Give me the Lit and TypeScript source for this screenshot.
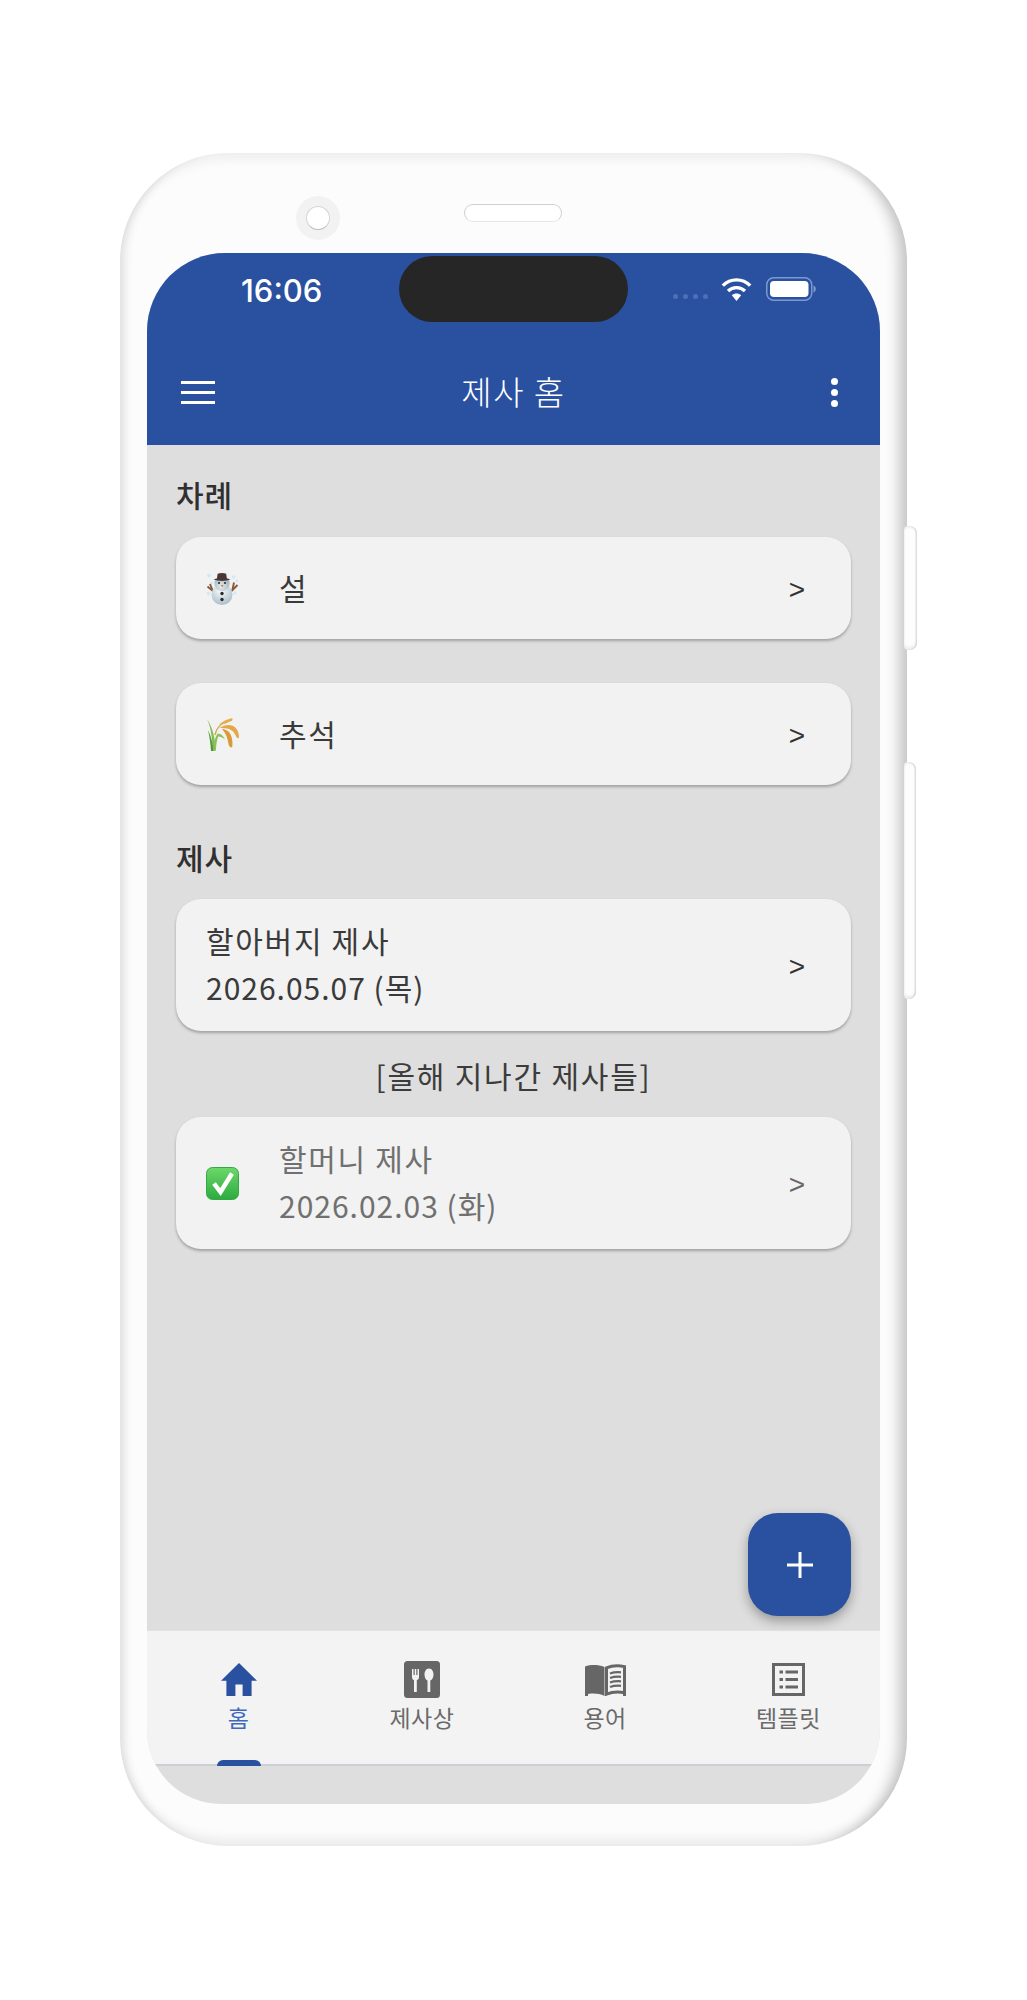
import { LitElement, html, css, svg } from "lit";
import { customElement } from "lit/decorators.js";

const snowman = svg`<svg class="emoji" viewBox="0 0 33 33">
  <defs>
    <radialGradient id="sb" cx="45%" cy="30%" r="75%"><stop offset="0" stop-color="#fbfdfd"/><stop offset="1" stop-color="#a4b9c4"/></radialGradient>
    <radialGradient id="sh" cx="45%" cy="70%" r="75%"><stop offset="0" stop-color="#e6eef1"/><stop offset="1" stop-color="#8fa7b3"/></radialGradient>
  </defs>
  <g fill="#cfeaf8"><circle cx="3" cy="3.500" r="2"/><circle cx="27.500" cy="5" r="1.800"/><circle cx="31" cy="9" r="1.400"/><circle cx="2.500" cy="21.500" r="1.900"/><circle cx="29" cy="21" r="1.700"/><circle cx="5.500" cy="11" r="1.400"/></g>
  <path d="M1.500 14.500l6 5M4 12l2.500 6M31.500 13l-6 6M28 10.500l-1.500 7" stroke="#8a5a3c" stroke-width="1.900" fill="none"/>
  <circle cx="16" cy="22.500" r="10.500" fill="url(#sb)"/>
  <circle cx="16" cy="11.500" r="7.600" fill="url(#sh)"/>
  <path d="M7.500 7.200c2-.6 2.800-.5 3.500-.8l.6-4.700c2.600-1 6.200-1 8.600 0l.6 4.700c.7.300 1.800.2 3.700.8-5 2.300-12 2.300-17-0z" fill="#4a3634"/>
  <circle cx="13" cy="11" r="1.100" fill="#2f2f2f"/><circle cx="19" cy="11" r="1.100" fill="#2f2f2f"/>
  <path d="M14.700 13h2.800l-1.300 2.600z" fill="#e8763a"/>
  <circle cx="16" cy="21.500" r="1.700" fill="#2b2b2b"/><circle cx="16" cy="27.500" r="1.700" fill="#2b2b2b"/>
</svg>`;

const rice = svg`<svg class="emoji" viewBox="0 0 33 33">
  <path d="M1 1c4 8 5.500 20 5.500 32l3-.6C9.500 21 6.500 9 1 1z" fill="#84ba4e"/>
  <path d="M5 33c-.5-8-1.500-14-3-21 3 6 5 14 5.500 21z" fill="#4f9a34"/>
  <path d="M7.500 33c.3-7 1-13 4-17.500 3.500 0 6 2.800 7.500 5.800-2.500-1.800-5-3-6.800-2.800-1.700 4.500-2 9.500-2.400 14z" fill="#8cc05a"/>
  <path d="M9 17C11 8 18 3 26 2" stroke="#cfa95e" stroke-width="1.400" fill="none"/>
  <path d="M13 6.500c3.500-3 8-5.500 12.500-6.300 1.800 0 1.300 2-.3 2.900-3.500 2-8 3.600-12.200 3.400z" fill="#e5ae4d"/>
  <path d="M13.500 10c5.500-4 12-4 15.500-.8 3 2.800 4 6.500 4 10.800-1.800.7-2.800-1-3.700-3.200-1.900-4.300-6-7.300-15.800-6.800z" fill="#e5a847"/>
  <path d="M16 11c5 .5 8 3 9.300 7.300.9 3.200 1.700 7 .9 10.700-1.900 1.400-3.200-.6-3.700-3.200-.9-5.300-2.700-11-6.500-14.800z" fill="#d99a38"/>
</svg>`;

const check = svg`<svg class="emoji" viewBox="0 0 33 33">
  <defs><linearGradient id="cg" x1="0" y1="0" x2="0" y2="1"><stop offset="0" stop-color="#6cd86a"/><stop offset="1" stop-color="#2cab3f"/></linearGradient></defs>
  <rect x=".5" y=".5" width="32" height="32" rx="6" fill="url(#cg)" stroke="#37a648" stroke-width="1"/>
  <path d="M8 16.500l6.500 8.500L26 6.500" fill="none" stroke="#fff" stroke-width="4.500" stroke-linejoin="miter"/>
</svg>`;

const homeIcon = svg`<svg class="nav-svg" width="36" height="33" viewBox="2 3 20 17.400" preserveAspectRatio="none"><path fill="#2a50a0" d="M10 20.400v-6h4v6h5v-8h3L12 3 2 12.400h3v8z"/></svg>`;
const dishIcon = svg`<svg class="nav-svg" width="36" height="37" viewBox="0 0 36 37">
  <rect width="36" height="37" rx="3.500" fill="#666"/>
  <path fill="#f2f2f2" d="M8 8h1.500v6h1.200V8h1.600v6h1.200V8H15v8c0 1.800-1 2.800-2.200 3.200V31H10V19.200C8.800 18.800 8 17.800 8 16z"/>
  <path fill="#f2f2f2" d="M25 7.500c3 0 4.500 3 4.500 6 0 3-1.500 5.400-3.200 5.900V31h-2.800V19.400c-1.700-.5-3-2.900-3-5.900 0-3 1.500-6 4.500-6z"/>
</svg>`;
const bookIcon = svg`<svg class="nav-svg" width="41" height="32" viewBox="0 0 41 32">
  <path fill="#666" d="M0 2.500C6 .5 13 .5 19.500 3v29C13 29 6 29 0 31z"/>
  <path fill="none" stroke="#666" stroke-width="3" d="M21.500 3.800C27 1.600 33.500 1.400 39.500 2.600v26.200C33.500 27.600 27 28 21.500 30.200z"/>
  <path fill="#666" d="M0 30h3v2H0zM38 29h3v3h-3z"/>
  <path fill="none" stroke="#666" stroke-width="2.200" d="M25 9.500c3.500-1.300 7-1.500 11-1.200M25 14c3.500-1.300 7-1.500 11-1.200M25 18.500c3.500-1.300 7-1.500 11-1.200M25 23c3.500-1.300 7-1.500 11-1.200"/>
</svg>`;
const listIcon = svg`<svg class="nav-svg" width="33" height="33" viewBox="0 0 33 33">
  <rect x="1.500" y="1.500" width="30" height="30" fill="none" stroke="#666" stroke-width="3"/>
  <g fill="#666"><rect x="7.500" y="7.500" width="3.500" height="3"/><rect x="7.500" y="15" width="3.500" height="3"/><rect x="7.500" y="22.500" width="3.500" height="3"/>
  <rect x="13.500" y="7.500" width="12.500" height="3"/><rect x="13.500" y="15" width="12.500" height="3"/><rect x="13.500" y="22.500" width="12.500" height="3"/></g>
</svg>`;

const navItems = [
  { icon: homeIcon, label: "홈", active: true },
  { icon: dishIcon, label: "제사상", active: false },
  { icon: bookIcon, label: "용어", active: false },
  { icon: listIcon, label: "템플릿", active: false },
];

@customElement("app-root")
export class AppRoot extends LitElement {
  static styles = css`
    :host {
      display: block;
      width: 1027px;
      height: 2000px;
      background: #fff;
      font-family: "Noto Sans CJK KR", "Noto Sans", sans-serif;
      color: #3a3a3a;
    }
    .page { padding: 153px 0 0 120px; }
    .phone {
      position: relative;
      box-sizing: border-box;
      width: 787px;
      height: 1693px;
      padding: 100px 27px 42px;
      border-radius: 108px;
      background: #fcfcfc;
      box-shadow:
        inset -20px 0 14px -12px rgba(0, 0, 0, 0.22),
        inset 14px 0 10px -10px rgba(0, 0, 0, 0.12),
        inset 0 16px 12px -10px rgba(0, 0, 0, 0.06),
        inset 0 -16px 12px -10px rgba(0, 0, 0, 0.08);
    }
    .side {
      position: absolute;
      left: 784px;
      background: #fdfdfd;
      border-radius: 4px 7px 7px 4px;
      box-shadow: inset -1.5px 0 1px rgba(0, 0, 0, 0.1), inset 0 -3px 3px rgba(0, 0, 0, 0.07), inset 0 2px 2px rgba(0, 0, 0, 0.05);
    }
    .side.one { top: 373px; width: 13px; height: 124px; }
    .side.two { top: 609px; width: 12px; height: 237px; }
    .camera {
      position: absolute;
      left: 176px;
      top: 43px;
      width: 44px;
      height: 44px;
      border-radius: 50%;
      background: #f2f2f2;
      display: flex;
      align-items: center;
      justify-content: center;
    }
    .camera i {
      display: block;
      width: 24px;
      height: 24px;
      box-sizing: border-box;
      border-radius: 50%;
      background: #fff;
      border: 1.5px solid #d4d4d4;
      border-bottom-color: #bbb;
    }
    .speaker {
      position: absolute;
      left: 344px;
      top: 51px;
      width: 98px;
      height: 18px;
      box-sizing: border-box;
      border-radius: 9px;
      background: #fff;
      border: 1.5px solid #d0d0d0;
      border-bottom-color: #e6e6e6;
    }
    .screen {
      height: 1551px;
      border-radius: 78px 78px 74px 74px;
      overflow: hidden;
      background: #dedede;
      display: flex;
      flex-direction: column;
    }
    .appbar { background: #2a50a0; color: #fff; height: 192px; flex: none; }
    .status {
      position: relative;
      height: 87px;
      display: flex;
      align-items: flex-start;
      box-sizing: border-box;
      padding: 22px 0 0 94px;
    }
    .time { font: 500 31px/1 Inter, "Liberation Sans", sans-serif; }
    .notch {
      position: absolute;
      left: 252px;
      top: 3px;
      width: 229px;
      height: 66px;
      border-radius: 33px;
      background: #262626;
    }
    .indicators {
      position: absolute;
      left: 526px;
      top: 24px;
      display: flex;
      align-items: flex-start;
    }
    .signal { display: flex; gap: 5px; margin-top: 17px; margin-right: 13px; }
    .signal i { display: block; width: 5px; height: 5px; border-radius: 50%; background: #4b70b6; }
    .wifi { display: block; margin-right: 14px; }
    .battery { display: block; }
    .toolbar {
      height: 105px;
      display: grid;
      grid-template-columns: 1fr auto 1fr;
      align-items: center;
      padding: 0 34px;
    }
    .burger { display: flex; flex-direction: column; gap: 7px; width: 34px; }
    .burger i { display: block; height: 3px; background: #fff; }
    .title { font-size: 33px; font-weight: 300; line-height: 1; letter-spacing: 1.5px; margin-top: -3px; }
    .kebab { display: flex; flex-direction: column; gap: 4px; justify-self: end; margin-right: 8px; }
    .kebab i { display: block; width: 7px; height: 7px; border-radius: 50%; background: #fff; }
    .content {
      position: relative;
      flex: 1;
      display: flex;
      flex-direction: column;
      padding: 0 29px;
    }
    .section {
      font-size: 30px;
      font-weight: 500;
      letter-spacing: 1px;
      color: #303030;
      line-height: 40px;
      margin: 29px 0 23px;
    }
    .section.second { margin: 52px 0 22px; }
    .card {
      display: flex;
      align-items: center;
      height: 102px;
      box-sizing: border-box;
      padding: 0 46px 0 30px;
      background: #f2f2f2;
      border-radius: 25px;
      box-shadow: 0 2px 3px rgba(0, 0, 0, 0.28);
      flex: none;
    }
    .card + .card { margin-top: 44px; }
    .card.tall { height: 132px; }
    .card.muted { color: #707070; }
    .emoji { display: block; width: 33px; height: 33px; flex: none; margin-right: 40px; }
    .text { flex: 1; font-size: 30px; line-height: 47px; letter-spacing: 1.7px; padding-bottom: 2px; }
    .date { letter-spacing: 1px; display: block; }
    .arrow { font: 400 28px/1 "Liberation Sans", sans-serif; color: #333; margin-top: 3px; }
    .muted .arrow { color: #666; }
    .passed {
      text-align: center;
      font-size: 30px;
      line-height: 40px;
      letter-spacing: 1.8px;
      color: #3c3c3c;
      margin: 24px 0 22px;
    }
    .fab {
      position: absolute;
      right: 29px;
      bottom: 14px;
      width: 103px;
      height: 103px;
      border-radius: 30px;
      background: #2a50a0;
      box-shadow: 0 5px 12px rgba(0, 0, 0, 0.32);
      display: flex;
      align-items: center;
      justify-content: center;
    }
    .nav {
      flex: none;
      height: 136px;
      background: #f3f3f3;
      border-top: 1px solid #e2e2e2;
      border-bottom: 2px solid #cfcdd6;
      box-sizing: border-box;
      display: grid;
      grid-template-columns: repeat(4, 1fr);
    }
    .tab {
      position: relative;
      display: flex;
      flex-direction: column;
      align-items: center;
      color: #6a6a6a;
      font-size: 23px;
      letter-spacing: 0.5px;
      line-height: 30px;
    }
    .icon-box { height: 37px; margin-top: 30px; display: flex; align-items: center; justify-content: center; }
    .label { margin-top: 4px; }
    .tab.active { color: #3f69b8; }
    .bar {
      position: absolute;
      left: 50%;
      bottom: -2px;
      width: 44px;
      height: 6px;
      margin-left: -22px;
      border-radius: 8px 8px 0 0;
      background: #2a50a0;
    }
    .foot { flex: none; height: 38px; }
  `;

  private card(emoji: unknown, title: string, date: string | null, muted = false) {
    const cls = `card${date ? " tall" : ""}${muted ? " muted" : ""}`;
    return html`<div class=${cls}>
      ${emoji}
      <div class="text">${title}${date ? html`<span class="date">${date}</span>` : ""}</div>
      <div class="arrow">&gt;</div>
    </div>`;
  }

  render() {
    return html`<div class="page">
      <div class="phone">
        <div class="side one"></div>
        <div class="side two"></div>
        <div class="camera"><i></i></div>
        <div class="speaker"></div>
        <div class="screen">
          <div class="appbar">
            <div class="status">
              <span class="time">16:06</span>
              <div class="notch"></div>
              <div class="indicators">
                <div class="signal"><i></i><i></i><i></i><i></i></div>
                <svg class="wifi" width="31" height="24" viewBox="0 0 31 24">
                  <path fill="none" stroke="#fff" stroke-width="3.400" d="M1.800 8.600C9.500 1 21.500 1 29.200 8.600M7 14c4.800-4.500 12.200-4.500 17 0"/>
                  <path fill="#fff" d="M10.800 18.300c2.800-2.300 6.600-2.300 9.400 0L15.500 24z"/>
                </svg>
                <svg class="battery" width="50" height="24" viewBox="0 0 50 24">
                  <rect x=".75" y=".75" width="45" height="22.500" rx="7" fill="none" stroke="#7d98cc" stroke-width="1.500"/>
                  <rect x="4" y="4" width="38.500" height="16" rx="4" fill="#fff"/>
                  <path d="M47.500 8.500c1.500.5 2.300 1.800 2.300 3.500s-.8 3-2.300 3.500z" fill="#7d98cc"/>
                </svg>
              </div>
            </div>
            <div class="toolbar">
              <div class="burger"><i></i><i></i><i></i></div>
              <div class="title">제사 홈</div>
              <div class="kebab"><i></i><i></i><i></i></div>
            </div>
          </div>
          <div class="content">
            <div class="section">차례</div>
            ${this.card(snowman, "설", null)}
            ${this.card(rice, "추석", null)}
            <div class="section second">제사</div>
            ${this.card("", "할아버지 제사", "2026.05.07 (목)")}
            <div class="passed">[올해 지나간 제사들]</div>
            ${this.card(check, "할머니 제사", "2026.02.03 (화)", true)}
            <div class="fab">
              <svg width="26" height="26" viewBox="0 0 26 26"><path d="M13 0v26M0 13h26" stroke="#fff" stroke-width="3"/></svg>
            </div>
          </div>
          <div class="nav">
            ${navItems.map(
              (n) => html`<div class="tab ${n.active ? "active" : ""}">
                <div class="icon-box">${n.icon}</div>
                <div class="label">${n.label}</div>
                ${n.active ? html`<div class="bar"></div>` : ""}
              </div>`
            )}
          </div>
          <div class="foot"></div>
        </div>
      </div>
    </div>`;
  }
}
